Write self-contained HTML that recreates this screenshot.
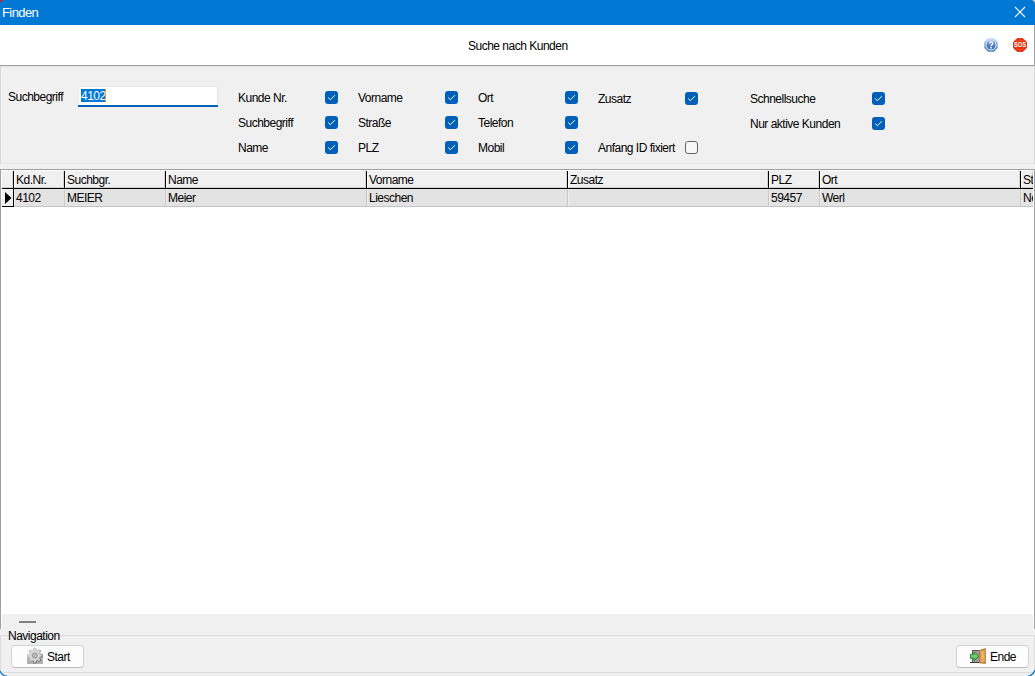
<!DOCTYPE html>
<html><head><meta charset="utf-8">
<style>
*{box-sizing:border-box;margin:0;padding:0}
html,body{width:1035px;height:676px;overflow:hidden;background:#f0f0f0;font-family:"Liberation Sans",sans-serif;font-size:12px;color:#000}
.a{position:absolute}
.t{position:absolute;white-space:nowrap;font-size:12px;letter-spacing:-0.5px;line-height:14px}
#title{left:0;top:0;width:1035px;height:25px;background:#0078d4}
#hdr{left:0;top:25px;width:1035px;height:40px;background:#fff}
.cb{position:absolute;width:13px;height:13px;border-radius:3px;background:#005fb8}
.cb svg{position:absolute;left:0;top:0}
.cbu{position:absolute;width:13px;height:13px;border-radius:3px;background:#f6f6f6;border:1px solid #666}
.hc{position:absolute;top:170px;height:18px;background:#f0f0f0;border-left:1px solid #fff;border-top:1px solid #fff}
.vl{position:absolute;background:#000;width:1px}
.dc{position:absolute;top:189px;height:17px;background:#e2e2e2}
.btn{position:absolute;top:645px;width:73px;height:23px;border:1px solid #d3d3d3;border-bottom-color:#bcbcbc;border-radius:4px;background:#fdfdfd}
</style></head><body>
<div id="title" class="a"></div>
<div class="t" style="left:2px;top:6px;color:#fff;font-size:13px;letter-spacing:-0.6px">Finden</div>
<svg class="a" style="left:1014px;top:6px" width="12" height="12" viewBox="0 0 12 12"><path d="M1 1L11 11M11 1L1 11" stroke="#fff" stroke-width="1.1"/></svg>
<div id="hdr" class="a"></div>
<div class="t" style="left:468px;top:39px">Suche nach Kunden</div>
<!-- help icon -->
<svg class="a" style="left:984px;top:38px" width="14" height="14" viewBox="0 0 14 14">
<defs><linearGradient id="ho" x1="0" y1="0" x2="0" y2="1"><stop offset="0" stop-color="#c4dbf5"/><stop offset="1" stop-color="#4f7fc0"/></linearGradient>
<linearGradient id="hi" x1="0" y1="0" x2="0" y2="1"><stop offset="0" stop-color="#6e9edb"/><stop offset="1" stop-color="#3b6cae"/></linearGradient></defs>
<path d="M4.1 0.2H9.9L13.8 4.1V9.9L9.9 13.8H4.1L0.2 9.9V4.1Z" fill="url(#ho)"/>
<circle cx="7" cy="7" r="5.4" fill="#e6eff9"/>
<circle cx="7" cy="7" r="4.6" fill="url(#hi)"/>
<path d="M5.4 5.5Q5.4 4.0 7.1 4.0Q8.8 4.0 8.8 5.4Q8.8 6.2 7.6 6.8Q7.1 7.1 7.1 7.9" fill="none" stroke="#fff" stroke-width="1.4"/>
<rect x="6.3" y="8.9" width="1.7" height="1.5" fill="#fff"/>
</svg>
<!-- SOS icon -->
<svg class="a" style="left:1013px;top:38px" width="14" height="14" viewBox="0 0 14 14">
<path d="M4.2 0.4H9.8L13.6 4.2V9.8L9.8 13.6H4.2L0.4 9.8V4.2Z" fill="#e8320e" stroke="#d02000" stroke-width="0.8"/>
<circle cx="7" cy="7" r="4.8" fill="none" stroke="#f25028" stroke-width="0.8"/>
<text x="1" y="8.9" textLength="12" lengthAdjust="spacingAndGlyphs" font-family="Liberation Sans" font-weight="bold" font-size="6.6" fill="#fff">SOS</text>
</svg>
<!-- header bottom line -->
<div class="a" style="left:0;top:65px;width:1035px;height:1px;background:#a0a0a0"></div>
<div class="a" style="left:0;top:66px;width:1035px;height:1px;background:#e3e3e3"></div>
<!-- filter panel borders -->
<div class="a" style="left:0;top:66px;width:1px;height:98px;background:#d9d9d9"></div>
<div class="a" style="left:0;top:163px;width:1035px;height:1px;background:#e3e3e3"></div>
<div class="a" style="left:1034px;top:66px;width:1px;height:98px;background:#d9d9d9"></div>
<div class="a" style="left:1034px;top:25px;width:1px;height:40px;background:#a0a0a0"></div>

<div class="t" style="left:8px;top:90px">Suchbegriff</div>
<div class="a" style="left:78px;top:86px;width:140px;height:21px;background:#fff;border-right:1px solid #dde3ea;border-top:1px solid #ececec;border-left:1px solid #ececec"></div>
<div class="a" style="left:78px;top:105px;width:140px;height:2px;background:#005fb8"></div>
<div class="a" style="left:81px;top:89px;width:24px;height:13px;background:#0078d7"></div>
<div class="a" style="left:105px;top:89px;width:1px;height:13px;background:#f08a24"></div>
<div class="t" style="left:81px;top:89px;color:#fff">4102</div>

<div class="t" style="left:238px;top:91px">Kunde Nr.</div>
<div class="t" style="left:238px;top:116px">Suchbegriff</div>
<div class="t" style="left:238px;top:141px">Name</div>
<div class="t" style="left:358px;top:91px">Vorname</div>
<div class="t" style="left:358px;top:116px">Straße</div>
<div class="t" style="left:358px;top:141px">PLZ</div>
<div class="t" style="left:478px;top:91px">Ort</div>
<div class="t" style="left:478px;top:116px">Telefon</div>
<div class="t" style="left:478px;top:141px">Mobil</div>
<div class="t" style="left:598px;top:92px">Zusatz</div>
<div class="t" style="left:598px;top:141px">Anfang ID fixiert</div>
<div class="t" style="left:750px;top:92px">Schnellsuche</div>
<div class="t" style="left:750px;top:117px">Nur aktive Kunden</div>

<div class="cb" style="left:325px;top:91px"><svg width="13" height="13" viewBox="0 0 13 13"><path d="M3.2 6.6L5.4 8.7L9.9 4.2" fill="none" stroke="#fff" stroke-width="1"/></svg></div>
<div class="cb" style="left:445px;top:91px"><svg width="13" height="13" viewBox="0 0 13 13"><path d="M3.2 6.6L5.4 8.7L9.9 4.2" fill="none" stroke="#fff" stroke-width="1"/></svg></div>
<div class="cb" style="left:565px;top:91px"><svg width="13" height="13" viewBox="0 0 13 13"><path d="M3.2 6.6L5.4 8.7L9.9 4.2" fill="none" stroke="#fff" stroke-width="1"/></svg></div>
<div class="cb" style="left:685px;top:92px"><svg width="13" height="13" viewBox="0 0 13 13"><path d="M3.2 6.6L5.4 8.7L9.9 4.2" fill="none" stroke="#fff" stroke-width="1"/></svg></div>
<div class="cb" style="left:872px;top:92px"><svg width="13" height="13" viewBox="0 0 13 13"><path d="M3.2 6.6L5.4 8.7L9.9 4.2" fill="none" stroke="#fff" stroke-width="1"/></svg></div>
<div class="cb" style="left:325px;top:116px"><svg width="13" height="13" viewBox="0 0 13 13"><path d="M3.2 6.6L5.4 8.7L9.9 4.2" fill="none" stroke="#fff" stroke-width="1"/></svg></div>
<div class="cb" style="left:445px;top:116px"><svg width="13" height="13" viewBox="0 0 13 13"><path d="M3.2 6.6L5.4 8.7L9.9 4.2" fill="none" stroke="#fff" stroke-width="1"/></svg></div>
<div class="cb" style="left:565px;top:116px"><svg width="13" height="13" viewBox="0 0 13 13"><path d="M3.2 6.6L5.4 8.7L9.9 4.2" fill="none" stroke="#fff" stroke-width="1"/></svg></div>
<div class="cb" style="left:872px;top:117px"><svg width="13" height="13" viewBox="0 0 13 13"><path d="M3.2 6.6L5.4 8.7L9.9 4.2" fill="none" stroke="#fff" stroke-width="1"/></svg></div>
<div class="cb" style="left:325px;top:141px"><svg width="13" height="13" viewBox="0 0 13 13"><path d="M3.2 6.6L5.4 8.7L9.9 4.2" fill="none" stroke="#fff" stroke-width="1"/></svg></div>
<div class="cb" style="left:445px;top:141px"><svg width="13" height="13" viewBox="0 0 13 13"><path d="M3.2 6.6L5.4 8.7L9.9 4.2" fill="none" stroke="#fff" stroke-width="1"/></svg></div>
<div class="cb" style="left:565px;top:141px"><svg width="13" height="13" viewBox="0 0 13 13"><path d="M3.2 6.6L5.4 8.7L9.9 4.2" fill="none" stroke="#fff" stroke-width="1"/></svg></div>
<div class="cbu" style="left:685px;top:141px"></div>

<!-- grid -->
<div class="a" style="left:0;top:169px;width:1035px;height:460px;background:#fff;border:1px solid #a0a0a0;border-bottom:0"></div>
<div class="a" style="left:2px;top:614px;width:1031px;height:15px;background:#f0f0f0"></div>
<div class="a" style="left:0;top:635px;width:1035px;height:1px;background:#dcdcdc"></div>
<div class="a" style="left:0;top:672px;width:1035px;height:1px;background:#dcdcdc"></div>
<div class="a" style="left:0;top:635px;width:1px;height:38px;background:#dcdcdc"></div>
<div class="a" style="left:1034px;top:635px;width:1px;height:38px;background:#dcdcdc"></div>

<div class="a" style="left:1px;top:170px;width:12px;height:18px;background:#f0f0f0;border-left:1px solid #fff;border-top:1px solid #fff;border-right:1px solid #d6d6d6;border-bottom:1px solid #cfcfcf"></div>
<div class="a" style="left:14px;top:170px;width:50px;height:18px;background:#f0f0f0;border-left:1px solid #fff;border-top:1px solid #fff;border-right:1px solid #d6d6d6;border-bottom:1px solid #cfcfcf"></div>
<div class="a" style="left:65px;top:170px;width:100px;height:18px;background:#f0f0f0;border-left:1px solid #fff;border-top:1px solid #fff;border-right:1px solid #d6d6d6;border-bottom:1px solid #cfcfcf"></div>
<div class="a" style="left:166px;top:170px;width:200px;height:18px;background:#f0f0f0;border-left:1px solid #fff;border-top:1px solid #fff;border-right:1px solid #d6d6d6;border-bottom:1px solid #cfcfcf"></div>
<div class="a" style="left:367px;top:170px;width:200px;height:18px;background:#f0f0f0;border-left:1px solid #fff;border-top:1px solid #fff;border-right:1px solid #d6d6d6;border-bottom:1px solid #cfcfcf"></div>
<div class="a" style="left:568px;top:170px;width:200px;height:18px;background:#f0f0f0;border-left:1px solid #fff;border-top:1px solid #fff;border-right:1px solid #d6d6d6;border-bottom:1px solid #cfcfcf"></div>
<div class="a" style="left:769px;top:170px;width:50px;height:18px;background:#f0f0f0;border-left:1px solid #fff;border-top:1px solid #fff;border-right:1px solid #d6d6d6;border-bottom:1px solid #cfcfcf"></div>
<div class="a" style="left:820px;top:170px;width:200px;height:18px;background:#f0f0f0;border-left:1px solid #fff;border-top:1px solid #fff;border-right:1px solid #d6d6d6;border-bottom:1px solid #cfcfcf"></div>
<div class="a" style="left:1021px;top:170px;width:12px;height:18px;background:#f0f0f0;border-left:1px solid #fff;border-top:1px solid #fff;border-right:1px solid #d6d6d6;border-bottom:1px solid #cfcfcf"></div>
<div class="a" style="left:1px;top:189px;width:12px;height:17px;background:#f0f0f0;border-left:1px solid #fff"></div>
<div class="a" style="left:14px;top:189px;width:50px;height:17px;background:#e3e3e3;border-left:1px solid #ededed"></div>
<div class="a" style="left:65px;top:189px;width:100px;height:17px;background:#e3e3e3;border-left:1px solid #ededed"></div>
<div class="a" style="left:166px;top:189px;width:200px;height:17px;background:#e3e3e3;border-left:1px solid #ededed"></div>
<div class="a" style="left:367px;top:189px;width:200px;height:17px;background:#e3e3e3;border-left:1px solid #ededed"></div>
<div class="a" style="left:568px;top:189px;width:200px;height:17px;background:#e3e3e3;border-left:1px solid #ededed"></div>
<div class="a" style="left:769px;top:189px;width:50px;height:17px;background:#e3e3e3;border-left:1px solid #ededed"></div>
<div class="a" style="left:820px;top:189px;width:200px;height:17px;background:#e3e3e3;border-left:1px solid #ededed"></div>
<div class="a" style="left:1021px;top:189px;width:12px;height:17px;background:#e3e3e3;border-left:1px solid #ededed"></div>
<div class="a" style="left:13px;top:171px;width:1px;height:18px;background:#000"></div>
<div class="a" style="left:64px;top:171px;width:1px;height:18px;background:#000"></div>
<div class="a" style="left:64px;top:189px;width:1px;height:17px;background:#c8c8c8"></div>
<div class="a" style="left:165px;top:171px;width:1px;height:18px;background:#000"></div>
<div class="a" style="left:165px;top:189px;width:1px;height:17px;background:#c8c8c8"></div>
<div class="a" style="left:366px;top:171px;width:1px;height:18px;background:#000"></div>
<div class="a" style="left:366px;top:189px;width:1px;height:17px;background:#c8c8c8"></div>
<div class="a" style="left:567px;top:171px;width:1px;height:18px;background:#000"></div>
<div class="a" style="left:567px;top:189px;width:1px;height:17px;background:#c8c8c8"></div>
<div class="a" style="left:768px;top:171px;width:1px;height:18px;background:#000"></div>
<div class="a" style="left:768px;top:189px;width:1px;height:17px;background:#c8c8c8"></div>
<div class="a" style="left:819px;top:171px;width:1px;height:18px;background:#000"></div>
<div class="a" style="left:819px;top:189px;width:1px;height:17px;background:#c8c8c8"></div>
<div class="a" style="left:1020px;top:171px;width:1px;height:18px;background:#000"></div>
<div class="a" style="left:1020px;top:189px;width:1px;height:17px;background:#c8c8c8"></div>
<div class="a" style="left:13px;top:171px;width:1px;height:36px;background:#000"></div>
<div class="a" style="left:2px;top:188px;width:1031px;height:1px;background:#000"></div>
<div class="a" style="left:14px;top:206px;width:1019px;height:1px;background:#c4c4c4"></div>
<div class="a" style="left:2px;top:206px;width:12px;height:1px;background:#000"></div>
<svg class="a" style="left:5px;top:192px" width="7" height="12" viewBox="0 0 7 12"><path d="M0 0L6.5 6L0 12Z" fill="#000"/></svg>
<div class="t" style="left:16px;top:173px">Kd.Nr.</div>
<div class="t" style="left:16px;top:191px">4102</div>
<div class="t" style="left:67px;top:173px">Suchbgr.</div>
<div class="t" style="left:67px;top:191px">MEIER</div>
<div class="t" style="left:168px;top:173px">Name</div>
<div class="t" style="left:168px;top:191px">Meier</div>
<div class="t" style="left:369px;top:173px">Vorname</div>
<div class="t" style="left:369px;top:191px">Lieschen</div>
<div class="t" style="left:570px;top:173px">Zusatz</div>
<div class="t" style="left:771px;top:173px">PLZ</div>
<div class="t" style="left:771px;top:191px">59457</div>
<div class="t" style="left:822px;top:173px">Ort</div>
<div class="t" style="left:822px;top:191px">Werl</div>
<div class="a" style="left:1021px;top:170px;width:12px;height:18px;overflow:hidden"><div class="t" style="left:2px;top:3px">St</div></div>
<div class="a" style="left:1021px;top:189px;width:12px;height:17px;overflow:hidden"><div class="t" style="left:2px;top:2px">Ne</div></div>
<div class="t" style="left:8px;top:629px">Navigation</div>
<div class="a" style="left:19px;top:621px;width:17px;height:2px;background:#808080"></div>
<div class="btn" style="left:11px"></div>
<svg class="a" style="left:27px;top:648px" width="16" height="16" viewBox="0 0 16 16">
<defs><linearGradient id="gs" x1="0" y1="0" x2="1" y2="1"><stop offset="0.35" stop-color="#c4c4c4"/><stop offset="1" stop-color="#3a3a3a"/></linearGradient></defs>
<rect x="0" y="7.5" width="16" height="8.5" fill="#b2b2b2"/>
<path d="M6.6 0.1L9.0 0.1L9.2 2.2L10.7 2.8L12.3 1.5L13.9 3.1L12.6 4.7L13.2 6.2L15.3 6.4L15.3 8.8L13.2 9.0L12.6 10.5L13.9 12.1L12.3 13.7L10.7 12.4L9.2 13.0L9.0 15.1L6.6 15.1L6.4 13.0L4.9 12.4L3.3 13.7L1.7 12.1L3.0 10.5L2.4 9.0L0.3 8.8L0.3 6.4L2.4 6.2L3.0 4.7L1.7 3.1L3.3 1.5L4.9 2.8L6.4 2.2Z" fill="#d6d6d6" stroke="url(#gs)" stroke-width="0.9"/>
<circle cx="7.8" cy="7.6" r="2.5" fill="#bdbdbd" stroke="#8a8a8a" stroke-width="0.9"/>
</svg>
<div class="t" style="left:47px;top:650px">Start</div>
<div class="btn" style="left:956px"></div>
<svg class="a" style="left:970px;top:648px" width="16" height="16" viewBox="0 0 16 16">
<rect x="2.5" y="2.5" width="7" height="12" fill="#9c9c9c" stroke="#5a5a5a" stroke-width="1"/>
<rect x="0" y="14" width="9.5" height="1" fill="#3c3c3c"/>
<path d="M0.5 6.3H4.3V3.9L8.9 8.3L4.3 12.7V10.4H0.5Z" fill="#74c474" stroke="#2e8a2e" stroke-width="1"/>
<path d="M9.1 2L15.9 0V15.9L9.1 15.2Z" fill="#c27c36"/>
<path d="M10.4 3.2L14.7 2V14.5L10.4 14Z" fill="#e2ae6e"/>
<circle cx="13.2" cy="8.4" r="0.8" fill="#ffd21e"/>
</svg>
<div class="t" style="left:990px;top:650px">Ende</div>
<svg class="a" style="left:0;top:660px" width="16" height="16" viewBox="0 0 16 16"><path d="M0 11Q2 15.6 7.5 16.4" fill="none" stroke="#0a78d6" stroke-width="1.3"/></svg>
<svg class="a" style="left:1019px;top:660px" width="16" height="16" viewBox="0 0 16 16"><path d="M16 10Q14 15.6 8.5 16.4" fill="none" stroke="#0a78d6" stroke-width="1.3"/></svg>
<svg class="a" style="left:0;top:0" width="4" height="4" viewBox="0 0 4 4"><path d="M0 0H3Q1 1 0 3Z" fill="#e0201a"/></svg>
<svg class="a" style="left:1031px;top:0" width="4" height="4" viewBox="0 0 4 4"><path d="M1 0H4V3Q3 1 1 0Z" fill="#d8c8b8"/></svg>
</body></html>
